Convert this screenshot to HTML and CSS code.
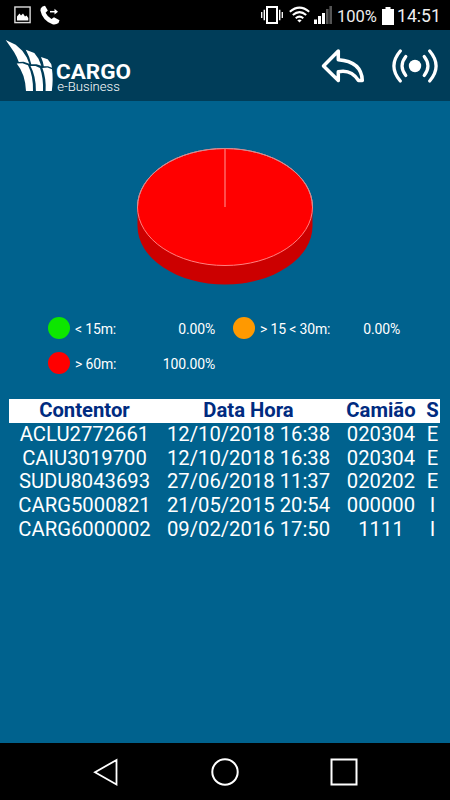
FILE: index.html
```html
<!DOCTYPE html>
<html lang="pt">
<head>
    <meta charset="UTF-8">
    <meta name="viewport" content="width=device-width, initial-scale=1.0">
    <title>Cargo e-Business</title>
    <link rel="stylesheet" href="styles.css">
</head>
<body>
    <div class="status-bar">
        <svg class="status-left" width="70" height="30" viewBox="0 0 70 30">
            <rect x="14.9" y="7" width="15.2" height="15.6" fill="none" stroke="#ddd" stroke-width="1.4"/>
            <path d="M17 20.500V16.500L19.500 13.500 21 15.500 23 13.500 25 16.500 26.500 15.500 28.300 18V20.500z" fill="#fff"/>
            <path d="M42.500 6.500L45 5.800 47.800 10.500 45.600 12.800Q47.500 17 51.500 19L54 17.300 59.500 20.200 58.500 23Q56 25 52.500 24.300Q42.500 20.500 40.400 10.500Q40.200 8 42.500 6.500z" fill="#fff"/>
            <path d="M50 11.700H56" stroke="#fff" stroke-width="1.5"/>
            <path d="M54.500 8.800L58 11.700 54.500 14.600z" fill="#fff"/>
        </svg>
        <svg class="status-icons" width="74" height="30" viewBox="260 0 74 30">
            <rect x="267" y="7" width="10" height="16" fill="none" stroke="#fff" stroke-width="2"/>
            <path d="M264.300 9.800V20.200M279.700 9.800V20.200" stroke="#fff" stroke-width="1.4"/>
            <path d="M261.700 12V18M282.300 12V18" stroke="#fff" stroke-width="1.3"/>
            <g fill="none" stroke="#fff" stroke-width="2">
                <path d="M289.800 11.800Q299.500 3.500 309.200 11.800"/>
                <path d="M292.800 15Q299.500 9.300 306.200 15"/>
                <path d="M295.700 18.200Q299.500 15 303.300 18.200"/>
            </g>
            <path d="M297.300 20.200Q299.500 18.600 301.700 20.200L299.500 22.600z" fill="#fff"/>
            <path d="M314 19.500h3V24h-3zM318 16h3v8h-3zM322 13h3v11h-3z" fill="#fff"/>
            <path d="M326 9h2.600v15H326zM329.400 6H332v18h-2.600z" fill="#555"/>
        </svg>
        <span class="battery-level">100%</span>
        <svg class="battery" width="12" height="18" viewBox="0 0 12 18">
            <path d="M0 2H3.500V0H8.500V2H12V18H0z" fill="#fff"/>
        </svg>
        <span class="clock">14:51</span>
    </div>

    <div class="header">
        <svg class="logo" width="140" height="71" viewBox="0 30 140 71">
            <g fill="#fff">
                <path d="M5.700 40L15.700 44.700 22.300 50.700 26.800 57.500 29.300 63.800 23.500 61.700 18.800 61.900Q17 57 14 52z"/>
                <path d="M25.800 49.800L34.300 53 38.500 58.700 41.300 65.700 36.500 64.200 31.300 64.300Q29.500 56.500 25.800 49.800z"/>
                <path d="M41 57L47.700 59.300 51.200 64 52 67.700 48 66.300 43.800 66.300Q43 61.500 41 57z"/>
                <path d="M16.700 63.500L22.500 63.200 28 65.200Q33.300 75.500 33 91H26Q25.300 74 16.700 63.500z"/>
                <path d="M30.500 66L35.500 66 40 68Q43.500 78 43 91H35.900Q36 76 30.500 66z"/>
                <path d="M42.400 68L47.500 67.600 52 69.200Q53.400 79 51.800 91H45.600Q46.300 78 42.400 68z"/>
            </g>
            <text class="logo-name" x="56" y="79.300" textLength="75" lengthAdjust="spacingAndGlyphs">CARGO</text>
            <text class="logo-sub" x="57.300" y="91" textLength="62.500" lengthAdjust="spacingAndGlyphs">e-Business</text>
        </svg>
        <div class="header-actions">
            <svg width="44" height="36" viewBox="321 48 44 36" fill="none" stroke="#fff" stroke-width="3.5" stroke-linejoin="round">
                <path d="M338.300 51L323.500 66 338.300 80.500V71.800Q351 69 358.500 80.500H362.300Q361.500 61.500 338.300 59.800z"/>
            </svg>
            <svg width="48" height="36" viewBox="391 48 48 36" fill="none" stroke="#fff" stroke-width="3.2" stroke-linecap="round">
                <circle cx="415" cy="66" r="6.2" fill="#fff" stroke="none"/>
                <path d="M405.800 56.500Q398.300 66 405.800 75.500M424.200 56.500Q431.700 66 424.200 75.500"/>
                <path d="M400.300 51Q387.500 66 400.300 81M429.700 51Q442.500 66 429.700 81"/>
            </svg>
        </div>
    </div>

    <div class="content">
        <svg class="chart" width="178" height="138" viewBox="136 147 178 138">
            <path d="M137.500 207V226A87.500 58.500 0 0 0 312.500 226V207z" fill="#c00"/>
            <ellipse cx="225" cy="207" rx="87.500" ry="58.500" fill="#f00" stroke="#ff8080"/>
            <path d="M137.500 207A87.500 58.500 0 0 1 312.500 207" fill="none" stroke="#c79198"/>
            <path d="M225 148.500V207" stroke="#ff6666" stroke-width="1.5"/>
        </svg>

        <div class="legend">
            <div class="legend-item">
                <span class="dot green"></span>
                <span class="label">&lt; 15m:</span>
                <span class="value">0.00%</span>
            </div>
            <div class="legend-item">
                <span class="dot orange"></span>
                <span class="label">&gt; 15 &lt; 30m:</span>
                <span class="value">0.00%</span>
            </div>
            <div class="legend-item">
                <span class="dot red"></span>
                <span class="label">&gt; 60m:</span>
                <span class="value">100.00%</span>
            </div>
        </div>

        <table class="containers">
            <colgroup>
                <col class="col-container">
                <col class="col-date">
                <col class="col-truck">
                <col class="col-state">
            </colgroup>
            <thead>
                <tr>
                    <th>Contentor</th>
                    <th>Data Hora</th>
                    <th>Camião</th>
                    <th>S</th>
                </tr>
            </thead>
            <tbody>
                <tr>
                    <td>ACLU2772661</td>
                    <td>12/10/2018 16:38</td>
                    <td>020304</td>
                    <td>E</td>
                </tr>
                <tr>
                    <td>CAIU3019700</td>
                    <td>12/10/2018 16:38</td>
                    <td>020304</td>
                    <td>E</td>
                </tr>
                <tr>
                    <td>SUDU8043693</td>
                    <td>27/06/2018 11:37</td>
                    <td>020202</td>
                    <td>E</td>
                </tr>
                <tr>
                    <td>CARG5000821</td>
                    <td>21/05/2015 20:54</td>
                    <td>000000</td>
                    <td>I</td>
                </tr>
                <tr>
                    <td>CARG6000002</td>
                    <td>09/02/2016 17:50</td>
                    <td>1111</td>
                    <td>I</td>
                </tr>
            </tbody>
        </table>
    </div>

    <div class="nav-bar">
        <svg width="28" height="30" viewBox="92 756 28 30" fill="none" stroke="#fff" stroke-width="1.8">
            <path d="M116.500 759V783.500L95 771.200z"/>
        </svg>
        <svg width="30" height="30" viewBox="0 0 30 30" fill="none" stroke="#fff" stroke-width="2">
            <circle cx="15" cy="15" r="12.7"/>
        </svg>
        <svg width="30" height="30" viewBox="0 0 30 30" fill="none" stroke="#fff" stroke-width="2">
            <rect x="2.5" y="2.5" width="25" height="25"/>
        </svg>
    </div>
</body>
</html>
```
FILE: styles.css
```css
* {
  box-sizing: border-box;
}

body {
  margin: 0;
  width: 450px;
  height: 800px;
  display: flex;
  flex-direction: column;
  overflow: hidden;
  background-color: #00628e;
  color: #fff;
  font-family: Roboto, Arial, sans-serif;
}

svg {
  display: block;
  flex: none;
}

/* Status bar */
.status-bar {
  display: flex;
  align-items: center;
  height: 30px;
  background-color: #000;
  color: #eee;
  font-size: 17.6px;
  white-space: nowrap;
}

.status-icons {
  margin-left: 190px;
}

.battery-level {
  width: 45px;
  margin-left: 3px;
  font-size: 16.5px;
  padding-top: 2px;
}

.battery {
  margin-top: 1px;
}

.clock {
  margin-left: 3px;
  padding-top: 2px;
}

/* Header */
.header {
  display: flex;
  justify-content: space-between;
  align-items: center;
  height: 71px;
  padding-right: 11px;
  background-color: #003d59;
}

.logo text {
  fill: #fff;
}

.logo-name {
  font-size: 20px;
  font-weight: bold;
}

.logo-sub {
  font-size: 13.5px;
  font-weight: 300;
}

.header-actions {
  display: flex;
  gap: 26px;
}

/* Content */
.content {
  flex: 1;
  padding: 46px 10px 0 9px;
}

.chart {
  margin: 0 auto 0 127px;
}

.legend {
  display: grid;
  grid-template-columns: 167px 167px;
  grid-auto-rows: 35px;
  column-gap: 18px;
  margin: 25px 0 0 39px;
  font-size: 14px;
  letter-spacing: -0.15px;
}

.legend-item {
  display: flex;
  align-items: center;
}

.dot {
  width: 22px;
  height: 22px;
  border-radius: 50%;
}

.green {
  background-color: #0de600;
}

.orange {
  background-color: #f90;
}

.red {
  background-color: #f00;
}

.label {
  margin-left: 5px;
  padding-top: 2px;
}

.value {
  margin-left: auto;
  padding-top: 2px;
}

/* Containers table */
.containers {
  width: 431px;
  margin-top: 19px;
  border-collapse: collapse;
  table-layout: fixed;
  font-size: 20.25px;
  line-height: 23.75px;
  text-align: center;
  white-space: nowrap;
}

.containers th,
.containers td {
  height: 23.75px;
  padding: 0;
}

.containers th {
  background-color: #fff;
  color: #002b80;
}

.col-container {
  width: 151px;
}

.col-date {
  width: 177px;
}

.col-truck {
  width: 88px;
}

.col-state {
  width: 15px;
}

/* Navigation bar */
.nav-bar {
  display: flex;
  align-items: center;
  height: 57px;
  padding-left: 92px;
  background-color: #000;
  gap: 89.5px;
}
```
